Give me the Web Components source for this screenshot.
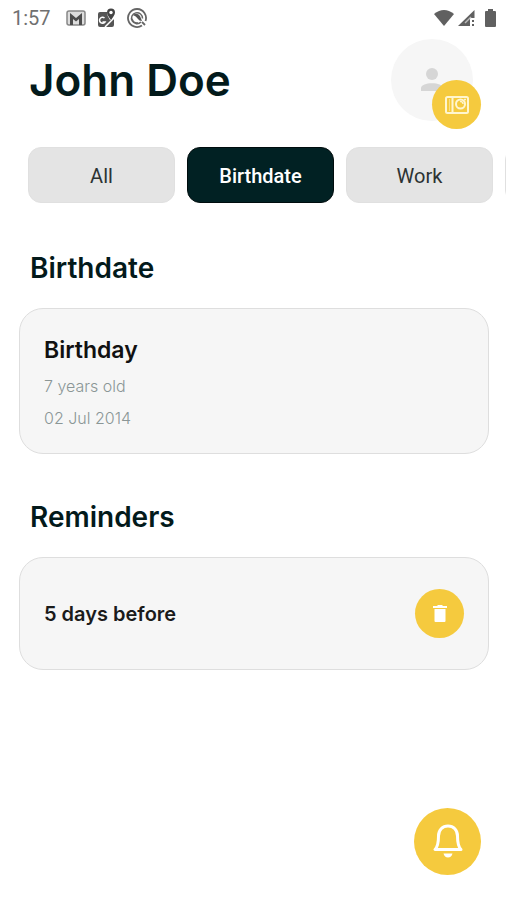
<!DOCTYPE html>
<html lang="en">
<head>
<meta charset="utf-8">
<meta name="viewport" content="width=device-width, initial-scale=1">
<title>John Doe</title>
<style>
  body { margin: 0; min-height: 100vh; background: #fff; color: #031a1b; font-family: Inter, "Open Sans", sans-serif; --accent: #f5ca3e; }
</style>
</head>
<body>
<contact-screen>
  <status-bar slot="status" time="1:57"></status-bar>
  <profile-header slot="header">John Doe</profile-header>
  <tab-strip slot="tabs">
    <tab-chip>All</tab-chip>
    <tab-chip selected>Birthdate</tab-chip>
    <tab-chip>Work</tab-chip>
    <tab-chip label="More"></tab-chip>
  </tab-strip>
  <content-section heading="Birthdate">
    <info-card>
      <span slot="title">Birthday</span>
      <span slot="line">7 years old</span>
      <span slot="line">02 Jul 2014</span>
    </info-card>
  </content-section>
  <content-section heading="Reminders">
    <reminder-card>5 days before</reminder-card>
  </content-section>
  <round-button slot="action" label="Add reminder" style="--size:67px">
    <svg width="32" height="36" viewBox="0 0 32 36" fill="none" stroke="#fff" stroke-width="3" stroke-linejoin="round" stroke-linecap="round"><path d="M3 25.500H29C26 22.500 25.500 19 25.500 12C25.500 6 21.500 2 16 2S6.500 6 6.500 12C6.500 19 6 22.500 3 25.500Z"/><path d="M11.500 29.500H20.500Q19.500 33.500 16 33.500T11.500 29.500Z" fill="#fff" stroke="none"/></svg>
  </round-button>
</contact-screen>
<script>
function define(name, markup, setup) {
  const template = document.createElement('template');
  template.innerHTML = markup;
  customElements.define(name, class extends HTMLElement {
    constructor() {
      super();
      this.attachShadow({ mode: 'open' }).append(template.content.cloneNode(true));
    }
    connectedCallback() { if (setup) setup(this, this.shadowRoot); }
  });
}

define('contact-screen', `
<style>
  :host { display: flex; flex-direction: column; min-height: 100vh; }
  main { display: flex; flex-direction: column; gap: 36px; padding: 35px 17px 100px 19px; }
  .fab { position: fixed; right: 25px; bottom: 25px; }
</style>
<slot name="status"></slot><slot name="header"></slot><slot name="tabs"></slot>
<main><slot></slot></main>
<div class="fab"><slot name="action"></slot></div>`);

define('status-bar', `
<style>
  :host { display: flex; align-items: center; height: 36px; padding: 0 5px 0 12px; color: #707070; font: 400 20px/24px Roboto, sans-serif; }
  .icons { display: flex; align-items: center; gap: 11px; margin-left: 15px; }
  .system { display: flex; align-items: center; gap: 3px; margin-left: auto; }
  svg { display: block; }
</style>
<time></time>
<div class="icons">
  <svg width="20" height="16" viewBox="0 0 20 16"><rect x="1" y="1" width="18" height="14" rx="2" fill="#ddd" stroke="#888" stroke-width="1.500"/><path d="M4 15V3L10 8L16 3V15H13V9L10 11.500L7 9V15Z" fill="#4d4d4d"/></svg>
  <svg width="19" height="20" viewBox="0 0 19 20"><path d="M3 4H10Q10 8 13 12L17 11V17Q17 19 15 19H3Q1 19 1 17V6Q1 4 3 4Z" fill="#555"/><path d="M7.500 10A3 3 0 1 0 8 14H5.500M8 19L17 10" fill="none" stroke="#fff" stroke-width="1.500"/><path d="M14 12C12 9 10 7 10 4.500A4 4 0 0 1 18 4.500C18 7 16 9 14 12Z" fill="#444"/><circle cx="14" cy="4.500" r="1.700" fill="#fff"/></svg>
  <svg width="20" height="20" viewBox="0 0 20 20" fill="none" stroke="#666"><path d="M18.500 13A9 9 0 1 0 15 17.500" stroke-width="1.800"/><path d="M14 14A5.500 5.500 0 1 1 15.500 10.500M5 11Q6.500 15.500 11 15" stroke-width="1.500"/><path d="M6 7Q10 4 13 8L15 13Q12 13 11 11Q9 8 6 7Z" fill="#555" stroke="none"/><path d="M15 14L18 17" stroke-width="1.800"/></svg>
</div>
<div class="system">
  <svg width="22" height="18" viewBox="0 0 22 18"><path d="M1 5Q11-3 21 5L11 17Z" fill="#606060"/></svg>
  <svg width="18" height="18" viewBox="0 0 18 18"><path d="M0 17L16.500 1V9H12V17Z" fill="#606060"/><path d="M7 14L13 8" stroke="#bbb" stroke-width="1.500"/><path d="M14 11H16V13H14ZM14 15H16V17H14Z" fill="#606060"/></svg>
  <svg width="22" height="18" viewBox="0 0 22 18"><path d="M6 3Q6 2 7 2H9V0H14V2H16Q17 2 17 3V17Q17 18 16 18H7Q6 18 6 17Z" fill="#606060"/></svg>
</div>`, (el, root) => { root.querySelector('time').textContent = el.getAttribute('time'); });

define('round-button', `
<style>
  :host { display: block; }
  button { display: grid; place-items: center; width: var(--size, 49px); height: var(--size, 49px); padding: 0; border: 0; border-radius: 50%; background: var(--accent); cursor: pointer; }
  ::slotted(svg) { display: block; }
</style>
<button type="button"><slot></slot></button>`, (el, root) => {
  root.querySelector('button').setAttribute('aria-label', el.getAttribute('label'));
});

define('profile-header', `
<style>
  :host { display: flex; justify-content: space-between; align-items: center; padding: 3px 33px 0 29px; }
  h1 { margin: 0; font-size: 44px; line-height: 52px; font-weight: 600; }
  .avatar { position: relative; display: grid; place-items: center; width: 82px; height: 82px; border-radius: 50%; background: #f6f6f6; }
  .badge { position: absolute; right: -8px; bottom: -8px; }
</style>
<h1><slot></slot></h1>
<div class="avatar">
  <svg width="24" height="24" viewBox="0 0 24 24" fill="#d6d6d6"><circle cx="12" cy="6" r="6"/><path d="M1 23V20C1 13.500 23 13.500 23 20V23Z"/></svg>
  <round-button class="badge" label="Change photo">
    <svg width="24" height="18" viewBox="0 0 24 18" fill="none" stroke="#fff6cf" stroke-width="2"><rect x="1" y="1" width="22" height="16" rx="1.500"/><path d="M7.500 1V17"/><path d="M4.500 3V15" stroke-width="1" opacity=".5"/><circle cx="15.500" cy="8" r="4.500"/><path d="M15 5.500A2.500 2.500 0 0 1 18 8M19 3.500H21" stroke-width="1.500"/></svg>
  </round-button>
</div>`);

define('tab-strip', `
<style>
  :host { display: flex; gap: 12px; margin-top: 26px; padding-left: 28px; overflow: hidden; }
</style>
<slot></slot>`);

define('tab-chip', `
<style>
  :host { display: block; flex: 0 0 147px; }
  button { width: 100%; height: 56px; padding: 2px 0 0; border: 1px solid #e0e0e0; border-radius: 13px; background: #e4e4e4; color: #2c3333; font: 400 20px/24px Roboto, sans-serif; cursor: pointer; }
  :host([selected]) button { border-color: #000c0d; background: #012123; color: #fff; font-weight: 500; }
</style>
<button type="button"><slot></slot></button>`, (el, root) => {
  const button = root.querySelector('button');
  button.setAttribute('aria-pressed', el.hasAttribute('selected'));
  if (el.hasAttribute('label')) button.setAttribute('aria-label', el.getAttribute('label'));
});

define('content-section', `
<style>
  :host { display: flex; flex-direction: column; gap: 22px; }
  h2 { margin: 0; padding: 10px 11px 0; font-size: 28px; line-height: 35px; font-weight: 600; }
</style>
<h2></h2><slot></slot>`, (el, root) => { root.querySelector('h2').textContent = el.getAttribute('heading'); });

define('info-card', `
<style>
  :host { display: flex; flex-direction: column; gap: 5px; padding: 26px 24px 19px; border: 1px solid #dedede; border-radius: 24px; background: #f6f6f6; }
  h3 { margin: 0; color: #111; font-size: 23px; line-height: 30px; font-weight: 600; }
  .lines { display: flex; flex-direction: column; color: #8b9696; font-size: 16px; line-height: 32px; font-weight: 300; }
</style>
<h3><slot name="title"></slot></h3>
<div class="lines"><slot name="line"></slot></div>`);

define('reminder-card', `
<style>
  :host { display: flex; align-items: center; justify-content: space-between; padding: 31px 24px; border: 1px solid #dedede; border-radius: 24px; background: #f6f6f6; color: #1b1b1b; font-size: 20px; line-height: 28px; font-weight: 600; }
</style>
<span><slot></slot></span>
<round-button label="Delete reminder">
  <svg width="16" height="20" viewBox="0 0 16 20" fill="#fff"><path d="M1 2H5L6 1H10L11 2H15V4H1ZM2.500 5H13.500V17Q13.500 18 12.500 18H3.500Q2.500 18 2.500 17Z"/></svg>
</round-button>`);
</script>
</body>
</html>
